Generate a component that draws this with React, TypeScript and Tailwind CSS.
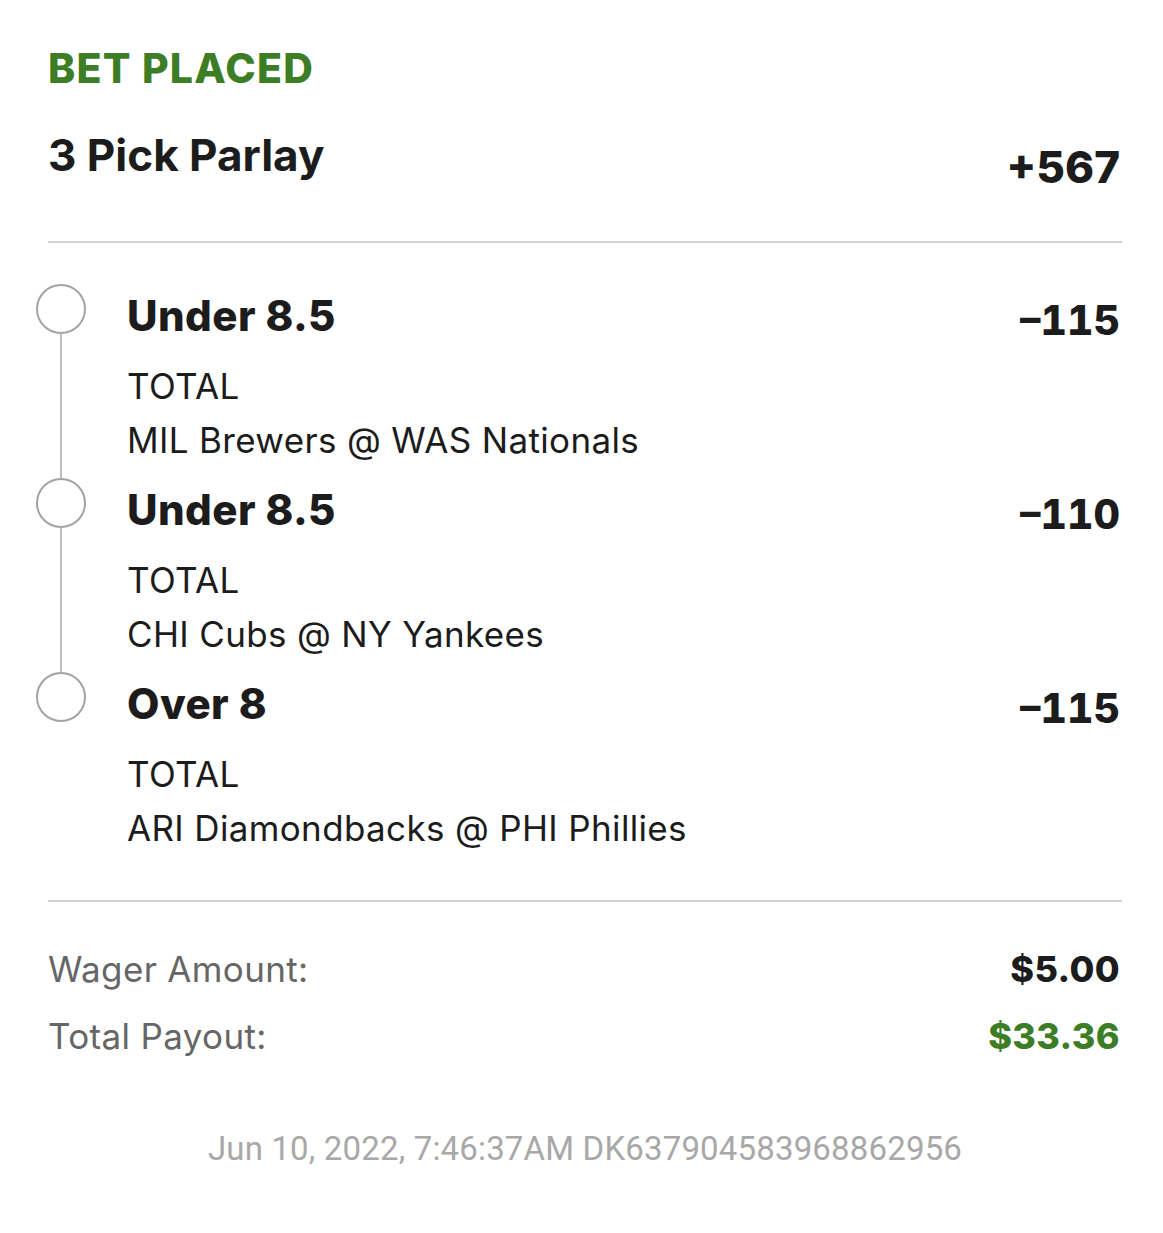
import React from "react";

const legs = [
  { pick: "Under 8.5", odds: "\u2013115", market: "TOTAL", game: "MIL Brewers @ WAS Nationals" },
  { pick: "Under 8.5", odds: "\u2013110", market: "TOTAL", game: "CHI Cubs @ NY Yankees" },
  { pick: "Over 8", odds: "\u2013115", market: "TOTAL", game: "ARI Diamondbacks @ PHI Phillies" },
];

export default function App() {
  return (
    <div
      className="w-[1163px] h-[1233px] bg-white pl-[48px] pr-[41px] pt-[43px] text-[#1c1c1c]"
      style={{ fontFamily: "Inter, 'Noto Sans', sans-serif" }}
    >
      <div className="text-[41px] leading-[50px] font-extrabold text-[#3c7d26] tracking-[0.03em]">BET PLACED</div>

      <div className="mt-[34px] flex justify-between items-start">
        <div className="text-[44px] leading-[56px] font-bold">3 Pick Parlay</div>
        <div className="mt-[12px] mr-[2px] text-[44px] leading-[56px] font-extrabold">+567</div>
      </div>

      <div className="mt-[46px] h-[2px] bg-[#d2d2d2]" />

      <div className="mt-[41px] -ml-[12px] flex flex-col">
        {legs.map((leg, i) => {
          const last = i === legs.length - 1;
          return (
            <div key={i} className={`flex ${last ? "" : "h-[194px]"}`}>
              <div className="w-[50px] flex flex-col items-center shrink-0">
                <div className="w-[50px] h-[50px] rounded-full border-2 border-[#a3a3a3] shrink-0" />
                {!last && <div className="w-[2px] flex-1 bg-[#bdbdbd]" />}
              </div>
              <div className="ml-[41px] flex-1 flex flex-col">
                <div className="flex justify-between items-start">
                  <div className="text-[42px] leading-[64px] font-extrabold tracking-[0.01em]">{leg.pick}</div>
                  <div className="mt-[4px] mr-[2px] text-[41px] leading-[64px] font-extrabold tabular-nums">
                    {leg.odds}
                  </div>
                </div>
                <div className="mt-[9px] text-[35px] leading-[50px] font-normal tracking-[0.01em]">{leg.market}</div>
                <div className="mt-[2px] text-[35px] leading-[54px] font-normal tracking-[0.01em]">{leg.game}</div>
              </div>
            </div>
          );
        })}
      </div>

      <div className="mt-[45px] h-[2px] bg-[#d2d2d2]" />

      <div className="mt-[42px] flex justify-between items-baseline">
        <div className="text-[35px] leading-[50px] text-[#666666] tracking-[0.01em]">Wager Amount:</div>
        <div className="mr-[2px] text-[36px] leading-[50px] font-extrabold tracking-[0.01em]">$5.00</div>
      </div>
      <div className="mt-[17px] flex justify-between items-baseline">
        <div className="text-[35px] leading-[50px] text-[#666666] tracking-[0.01em]">Total Payout:</div>
        <div className="mr-[2px] text-[36px] leading-[50px] font-extrabold text-[#3c7d26] tracking-[0.01em]">$33.36</div>
      </div>

      <div
        className="mt-[68px] text-center text-[33px] leading-[40px] text-[#a8a8a8] tracking-[0.005em]"
        style={{ fontFamily: "Roboto, 'Liberation Sans', sans-serif" }}
      >
        Jun 10, 2022, 7:46:37AM DK637904583968862956
      </div>
    </div>
  );
}
